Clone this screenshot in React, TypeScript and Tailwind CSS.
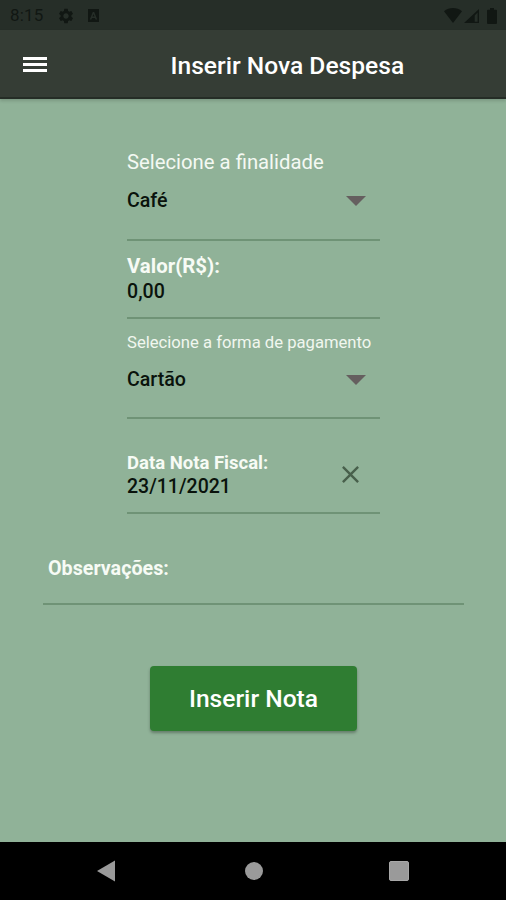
import { ReactNode } from "react";
import clsx from "clsx";
import { MdClose, MdSettings } from "react-icons/md";

function StatusBar() {
  return (
    <div className="flex h-[30px] items-center bg-[#262e28] pt-px text-[#111713]">
      <span className="ml-2.5 w-[47px] text-[17px] leading-none tracking-[0.2px]">8:15</span>
      <MdSettings className="size-[18px]" />
      <svg className="ml-[13px] h-[13px] w-[11px]" viewBox="0 0 11 13">
        <path
          fill="currentColor"
          fillRule="evenodd"
          d="M0 0h11v13H0zM4.8 3L1.8 10.5h1.6l.6-1.6h3l.6 1.6h1.6L6.2 3zM5.5 5l1 2.6h-2z"
        />
      </svg>
      <div className="mr-[9px] ml-auto flex items-center">
        <svg className="h-[15px] w-[18px]" viewBox="0 0 18 15">
          <path fill="currentColor" d="M0 3.2C5 -1 13 -1 18 3.2L9 15z" />
        </svg>
        <svg className="ml-[2px] h-[14px] w-[15px]" viewBox="0 0 15 14">
          <path
            fill="currentColor"
            fillRule="evenodd"
            d="M15 0v14H0zM13.6 3.5L10.7 6.4v6.3h2.9z"
          />
        </svg>
        <svg className="ml-[8px] h-[16px] w-[10px]" viewBox="0 0 10 16">
          <path
            fill="currentColor"
            d="M3 0h4v1.8h2a1 1 0 011 1V15a1 1 0 01-1 1H1a1 1 0 01-1-1V2.8a1 1 0 011-1h2z"
          />
        </svg>
      </div>
    </div>
  );
}

function AppBar() {
  return (
    <header className="relative flex h-[69px] items-center border-b-2 border-[#252d26] bg-[#353d35] text-white shadow-[0_2px_3px_rgba(0,0,0,0.15)]">
      <button type="button" className="ml-[23px] flex flex-col gap-[3px] pt-px">
        <span className="h-[3px] w-[24px] bg-white" />
        <span className="h-[3px] w-[24px] bg-white" />
        <span className="h-[3px] w-[24px] bg-white" />
      </button>
      <h1 className="ml-[123.5px] pt-[6px] text-[24.6px] font-medium whitespace-nowrap">
        Inserir Nova Despesa
      </h1>
    </header>
  );
}

type FieldProps = {
  className?: string;
  children: ReactNode;
};

function Field({ className, children }: FieldProps) {
  return (
    <div
      className={clsx(
        "flex w-[253px] flex-col border-b-2 border-[#6f9376]",
        className,
      )}
    >
      {children}
    </div>
  );
}

function Select({ value }: { value: string }) {
  return (
    <div className="flex h-[24px] items-center justify-between text-[19.6px] font-medium text-[#0a130c]">
      <span className="pt-[2px]">{value}</span>
      <svg className="mt-[2px] mr-[14px] h-[10px] w-[20px]" viewBox="0 0 20 10">
        <path fill="#655f5f" d="M0 0h20L10 10z" />
      </svg>
    </div>
  );
}

function NavigationBar() {
  return (
    <nav className="flex h-[58px] items-center justify-between bg-black pr-[97px] pl-[96px] text-[#9a9a9a]">
      <svg className="h-[22px] w-[20px]" viewBox="0 0 20 22">
        <path fill="currentColor" d="M19 0.5v21L1 11z" />
      </svg>
      <div className="ml-[2px] size-[18px] rounded-full bg-[#9a9a9a]" />
      <div className="size-[20px] rounded-[2px] border border-[#a8a8a8] bg-[#9a9a9a]" />
    </nav>
  );
}

export default function App() {
  return (
    <div className="flex h-[900px] w-[506px] flex-col overflow-hidden bg-[#90b298] font-['Roboto',sans-serif]">
      <StatusBar />
      <AppBar />
      <main className="flex grow flex-col items-center pl-px">
        <Field className="mt-[51px] h-[91px]">
          <span className="text-[20.3px] leading-[25px] text-[#f4f9f3]">
            Selecione a finalidade
          </span>
          <div className="mt-[13px]">
            <Select value="Café" />
          </div>
        </Field>
        <Field className="h-[78px] pt-[13px]">
          <span className="text-[20.4px] leading-[25px] font-bold text-[#f7fbf5]">
            Valor(R$):
          </span>
          <span className="text-[19.6px] leading-[26px] font-medium text-[#0a130c]">
            0,00
          </span>
        </Field>
        <Field className="h-[100px] pt-[12px]">
          <span className="text-[16.65px] leading-[24px] whitespace-nowrap text-[#f1f7ef]">
            Selecione a forma de pagamento
          </span>
          <div className="mt-[12px]">
            <Select value="Cartão" />
          </div>
        </Field>
        <Field className="h-[95px] pt-[32px]">
          <div className="flex items-center justify-between">
            <div className="flex flex-col">
              <span className="text-[18.5px] leading-[24px] font-bold text-[#f7fbf5]">
                Data Nota Fiscal:
              </span>
              <span className="text-[19.5px] leading-[24px] font-medium text-[#0a130c]">
                23/11/2021
              </span>
            </div>
            <MdClose className="mr-[15px] mb-px size-[29px] text-[#48604c]" />
          </div>
        </Field>
        <div className="mt-[42px] h-[49px] w-[421px] border-b-2 border-[#6f9376] pt-px pl-[5px] text-[19.7px] leading-[24px] font-bold text-[#f7fbf5]">
          Observações:
        </div>
        <button
          type="button"
          className="mt-[61px] h-[65px] w-[207px] rounded-[4px] bg-[#2f7d32] pt-[2px] text-[24.6px] font-medium text-white shadow-[0_2px_3px_rgba(0,0,0,0.3)]"
        >
          Inserir Nota
        </button>
      </main>
      <NavigationBar />
    </div>
  );
}
